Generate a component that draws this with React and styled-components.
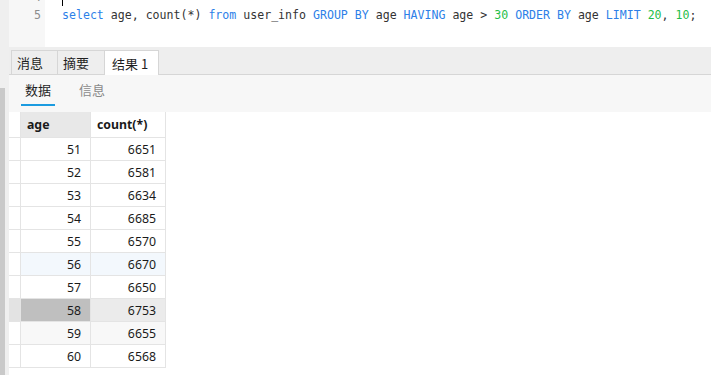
import styled, { createGlobalStyle } from 'styled-components'

const GlobalStyle = createGlobalStyle`
  html, body {
    margin: 0;
    padding: 0;
    background: #ffffff;
    overflow: hidden;
  }
  #root {
    width: 711px;
    height: 375px;
  }
`

const Page = styled.div`
  display: flex;
  width: 711px;
  height: 375px;
  overflow: hidden;
  font-family: "Noto Sans", "Noto Sans CJK SC", sans-serif;
`

const Rail = styled.div`
  display: flex;
  flex-direction: column;
  width: 9px;
  flex-shrink: 0;
  background: #efefef;
`

const RailThumb = styled.div`
  margin-top: 88px;
  width: 5px;
  flex: 1;
  background: #c9c9c9;
`

const Main = styled.div`
  display: flex;
  flex-direction: column;
  flex: 1;
  min-width: 0;
`

const Editor = styled.div`
  display: flex;
  height: 47px;
  flex-shrink: 0;
  overflow: hidden;
  background: #ffffff;
`

const Gutter = styled.div`
  width: 36px;
  flex-shrink: 0;
  background: #f7f7f7;
  padding-right: 4px;
  box-sizing: border-box;
  margin-top: -12px;
  text-align: right;
  font-family: "DejaVu Sans Mono", monospace;
  font-size: 11.6px;
  line-height: 18px;
  color: #8c8c8c;
`

const Code = styled.div`
  flex: 1;
  margin-top: -12px;
  padding-left: 17px;
  font-family: "DejaVu Sans Mono", "Liberation Mono", monospace;
  font-size: 11.58px;
  line-height: 18px;
  color: #333333;
  white-space: pre;
`

const CodeLine = styled.div`
  height: 18px;
`

const Cursor = styled.span`
  display: inline-block;
  vertical-align: top;
  width: 1px;
  height: 18px;
  background: #000000;
`

const Kw = styled.span`
  color: #2d7fe8;
`

const Num = styled.span`
  color: #1fbe4a;
`

const TabBar = styled.div`
  display: flex;
  align-items: flex-end;
  height: 28px;
  flex-shrink: 0;
  padding-left: 2px;
  background: #eeeeee;
  border-bottom: 1px solid #d6d6d6;
  box-sizing: border-box;
`

const Tab = styled.div`
  display: flex;
  align-items: center;
  height: ${p => (p.$active ? '25px' : '24px')};
  min-width: 47px;
  box-sizing: border-box;
  padding: 0 ${p => (p.$active ? '10px' : '8px')} 0 ${p => (p.$active ? '7px' : '5px')};
  margin-bottom: ${p => (p.$active ? '-1px' : '0')};
  border: 1px solid #d6d6d6;
  border-bottom: ${p => (p.$active ? 'none' : '0')};
  border-left: ${p => (p.$first ? '1px solid #d6d6d6' : '0')};
  background: ${p => (p.$active ? '#ffffff' : '#eeeeee')};
  font-family: "Noto Sans CJK SC", sans-serif;
  font-size: 13px;
  color: #1f1f1f;
`

const SubBar = styled.div`
  display: flex;
  align-items: stretch;
  height: 37px;
  flex-shrink: 0;
  padding-left: 12px;
  gap: 20px;
  background: #f7f7f7;
`

const SubTab = styled.div`
  display: flex;
  align-items: center;
  padding: 0 4px 2px;
  font-family: "Noto Sans CJK SC", sans-serif;
  font-size: 13px;
  color: ${p => (p.$active ? '#1f1f1f' : '#8a8a8a')};
  box-shadow: ${p => (p.$active ? 'inset 0 -2px 0 #1b9be0' : 'none')};
  margin-bottom: 6px;
`

const Grid = styled.div`
  display: grid;
  grid-template-columns: 12px 70px 75px;
  grid-auto-rows: 23px;
  grid-template-rows: 26px;
  align-content: start;
  flex: 1;
  background: #ffffff;
  font-size: 12.3px;
  color: #1a1a1a;
`

const Cell = styled.div`
  display: flex;
  align-items: center;
  justify-content: ${p => (p.$head ? 'flex-start' : 'flex-end')};
  padding: 0 ${p => (p.$head ? '0' : '9px')} 0 ${p => (p.$head ? '6px' : '0')};
  box-sizing: border-box;
  border-right: 1px solid #e4e4e4;
  border-bottom: 1px solid #e4e4e4;
  background: ${p => p.$bg || '#ffffff'};
  font-weight: ${p => (p.$head ? 700 : 400)};
  white-space: nowrap;
`

const rows = [
  [51, 6651],
  [52, 6581],
  [53, 6634],
  [54, 6685],
  [55, 6570],
  [56, 6670],
  [57, 6650],
  [58, 6753],
  [59, 6655],
  [60, 6568],
]

const rowColors = age => {
  if (age === 56) return { ind: '#ffffff', age: '#f3f8fd', count: '#f3f8fd' }
  if (age === 58) return { ind: '#e3e3e3', age: '#bfbfbf', count: '#ebebeb' }
  if (age === 59) return { ind: '#ffffff', age: '#f8f8f8', count: '#f8f8f8' }
  return {}
}

const App = () => {
  return (
    <>
      <GlobalStyle />
      <Page>
        <Rail>
          <RailThumb />
        </Rail>
        <Main>
          <Editor>
            <Gutter>
              <div>4</div>
              <div>5</div>
            </Gutter>
            <Code>
              <CodeLine><Cursor /></CodeLine>
              <CodeLine>
                <Kw>select</Kw>{' age, count(*) '}<Kw>from</Kw>{' user_info '}<Kw>GROUP BY</Kw>{' age '}<Kw>HAVING</Kw>{' age > '}<Num>30</Num>{' '}<Kw>ORDER BY</Kw>{' age '}<Kw>LIMIT</Kw>{' '}<Num>20</Num>{', '}<Num>10</Num>;
              </CodeLine>
            </Code>
          </Editor>
          <TabBar>
            <Tab $first>消息</Tab>
            <Tab>摘要</Tab>
            <Tab $active>结果 1</Tab>
          </TabBar>
          <SubBar>
            <SubTab $active>数据</SubTab>
            <SubTab>信息</SubTab>
          </SubBar>
          <Grid>
            <Cell $head />
            <Cell $head $bg="#e8e8e8">age</Cell>
            <Cell $head>count(*)</Cell>
            {rows.map(([age, count]) => {
              const c = rowColors(age)
              return [
                <Cell key={`i${age}`} $bg={c.ind} />,
                <Cell key={`a${age}`} $bg={c.age}>{age}</Cell>,
                <Cell key={`c${age}`} $bg={c.count}>{count}</Cell>,
              ]
            })}
          </Grid>
        </Main>
      </Page>
    </>
  )
}

export default App
